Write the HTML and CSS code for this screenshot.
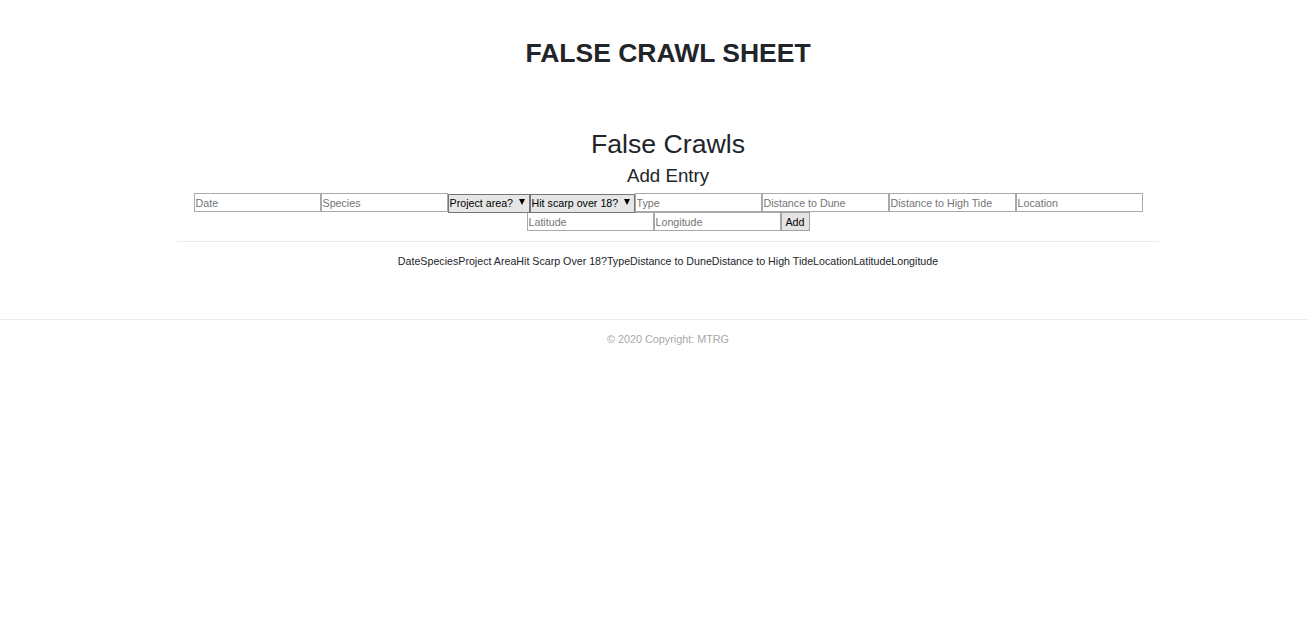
FILE: index.html
```html
<!DOCTYPE html>
<html lang="en">
<head>
<meta charset="utf-8">
<title>False Crawl Sheet</title>
<link rel="stylesheet" href="styles.css">
</head>
<body>
<div class="page">
  <header class="site-header">
    <h1 class="site-title">FALSE CRAWL SHEET</h1>
  </header>
  <main class="container">
    <h2 class="section-title">False Crawls</h2>
    <h3 class="sub-title">Add Entry</h3>
    <form class="entry-form">
      <input class="field" type="text" placeholder="Date">
      <input class="field" type="text" placeholder="Species">
      <span class="select-wrap sel-project"><select class="select"><option>Project area?</option></select></span>
      <span class="select-wrap sel-scarp"><select class="select"><option>Hit scarp over 18?</option></select></span>
      <input class="field" type="text" placeholder="Type">
      <input class="field" type="text" placeholder="Distance to Dune">
      <input class="field" type="text" placeholder="Distance to High Tide">
      <input class="field" type="text" placeholder="Location">
      <input class="field" type="text" placeholder="Latitude">
      <input class="field" type="text" placeholder="Longitude">
      <button class="add-btn" type="button">Add</button>
    </form>
    <hr class="divider">
    <div class="table-head"><span>Date</span><span>Species</span><span>Project Area</span><span>Hit Scarp Over 18?</span><span>Type</span><span>Distance to Dune</span><span>Distance to High Tide</span><span>Location</span><span>Latitude</span><span>Longitude</span></div>
  </main>
</div>
<footer class="site-footer">
  <div class="footer-text">© 2020 Copyright: MTRG</div>
</footer>
</body>
</html>
```

FILE: styles.css
```css
html, body {
  margin: 0;
  padding: 0;
  background: #fff;
}
body {
  font-family: "Liberation Sans", Arial, sans-serif;
  color: #212529;
}
.page {
  padding-left: 28px;
}
.site-header {
  padding-top: 36px;
  text-align: center;
}
.site-title {
  margin: 0;
  font-size: 26.5px;
  font-weight: bold;
  line-height: 34px;
}
.container {
  width: 982px;
  margin: 0 auto;
  text-align: center;
}
.section-title {
  margin: 58px 0 0;
  font-size: 26.7px;
  font-weight: normal;
  line-height: 32px;
}
.sub-title {
  margin: 1px 0 0;
  font-size: 18.7px;
  font-weight: normal;
  line-height: 30px;
}
.entry-form {
  display: flex;
  flex-wrap: wrap;
  justify-content: center;
  width: 100%;
  margin: 2px 0 0;
}
.field {
  box-sizing: border-box;
  width: 127px;
  height: 19px;
  margin: 0;
  padding: 0 1px;
  border: 1px solid #a9a9a9;
  font-family: "Liberation Sans", Arial, sans-serif;
  font-size: 10.7px;
  color: #212529;
  background: #fff;
  outline: none;
}
.field::placeholder {
  color: #757575;
}
.select-wrap {
  position: relative;
  display: inline-block;
  height: 19px;
}
.sel-project { width: 82px; }
.sel-scarp { width: 105px; }
.select {
  box-sizing: border-box;
  width: 100%;
  height: 19px;
  margin: 0;
  padding: 0 14px 0 1px;
  -webkit-appearance: none;
  appearance: none;
  border: 1px solid #767676;
  border-radius: 0;
  background: #e6e6e6;
  font-family: "Liberation Sans", Arial, sans-serif;
  font-size: 10.7px;
  color: #000;
}
.select-wrap::after {
  content: "";
  position: absolute;
  right: 5px;
  top: 6px;
  width: 0;
  height: 0;
  border-left: 3.5px solid transparent;
  border-right: 3.5px solid transparent;
  border-top: 6px solid #000;
  pointer-events: none;
}
.add-btn {
  box-sizing: border-box;
  width: 29px;
  height: 19px;
  margin: 0;
  padding: 0;
  border: 1px solid #a0a0a0;
  background: #e4e4e4;
  font-family: "Liberation Sans", Arial, sans-serif;
  font-size: 10.7px;
  color: #000;
}
.divider {
  margin: 10px 0 0;
  border: 0;
  border-top: 1px solid #ececec;
}
.table-head {
  margin-top: 12px;
  font-size: 10.67px;
  line-height: 14px;
  color: #212529;
}
.site-footer {
  margin-top: 51px;
  border-top: 1px solid #ececec;
}
.footer-text {
  padding: 12px 0 0 28px;
  text-align: center;
  font-size: 10.8px;
  line-height: 14px;
  color: #a8a8a8;
}
```
